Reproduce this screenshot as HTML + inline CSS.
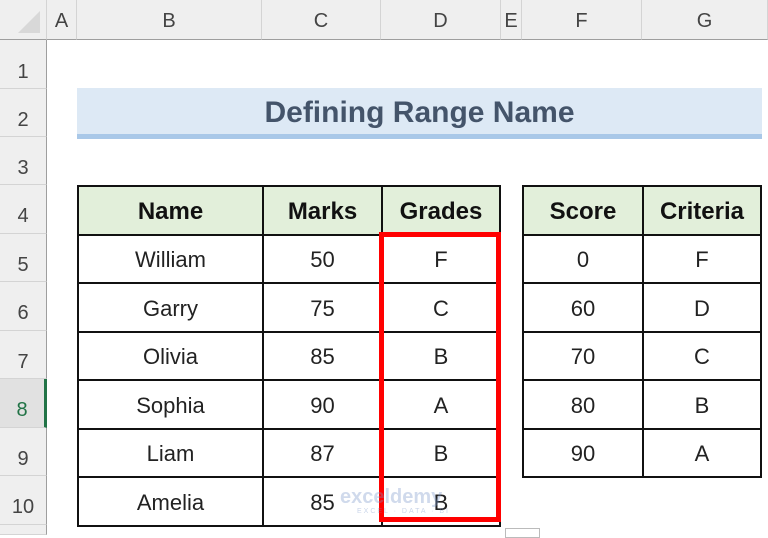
<!DOCTYPE html>
<html><head><style>
*{margin:0;padding:0;box-sizing:border-box}
body{width:768px;height:533px;background:#fff;position:relative;overflow:hidden;font-family:"Liberation Sans",Calibri,sans-serif}
.a{position:absolute}
.ch{top:0;height:40px;background:#efefef;border-right:1px solid #d4d4d4;border-bottom:1px solid #9e9e9e;color:#444;font-size:20px;text-align:center;line-height:42px}
.rh{left:0;width:47px;background:#efefef;border-bottom:1px solid #d4d4d4;border-right:1px solid #9e9e9e;color:#444;font-size:20px;text-align:center}
table{position:absolute;border-collapse:collapse}
td{border:2px solid #111;text-align:center;font-size:22px;color:#222;height:48.5px;padding:0;padding-top:3px}
tr.h td{background:#e2efda;font-weight:bold;font-size:24px;color:#111}
</style></head><body>
<div class="a ch" style="left:0;width:47px"><div style="position:absolute;right:6px;bottom:6px;width:0;height:0;border-left:22px solid transparent;border-bottom:22px solid #d8d8d8"></div></div>
<div class="a ch" style="left:47px;width:30px">A</div>
<div class="a ch" style="left:77px;width:185px">B</div>
<div class="a ch" style="left:262px;width:119px">C</div>
<div class="a ch" style="left:381px;width:120px">D</div>
<div class="a ch" style="left:501px;width:21px">E</div>
<div class="a ch" style="left:522px;width:120px">F</div>
<div class="a ch" style="left:642px;width:126px">G</div>
<div class="a rh" style="top:40px;height:49px;line-height:64px">1</div>
<div class="a rh" style="top:89px;height:48px;line-height:62px">2</div>
<div class="a rh" style="top:137px;height:48px;line-height:62px">3</div>
<div class="a rh" style="top:185px;height:49px;line-height:62px">4</div>
<div class="a rh" style="top:234px;height:48px;line-height:62px">5</div>
<div class="a rh" style="top:282px;height:49px;line-height:62px">6</div>
<div class="a rh" style="top:331px;height:48px;line-height:62px">7</div>
<div class="a rh" style="top:379px;height:49px;line-height:62px;background:#e1e1e1;border-right:3px solid #217346;color:#217346">8</div>
<div class="a rh" style="top:428px;height:48px;line-height:62px">9</div>
<div class="a rh" style="top:476px;height:49px;line-height:62px">10</div>
<div class="a rh" style="top:525px;height:10px"></div>
<div class="a" style="left:77px;top:88px;width:685px;height:51px;background:#dde9f5;border-bottom:5px solid #a9c8e8;text-align:center;font-weight:bold;font-size:30px;color:#44546a;line-height:50px">Defining Range Name</div>
<table style="left:77px;top:185px;width:424px">
<tr class="h"><td style="width:185px">Name</td><td style="width:119px">Marks</td><td>Grades</td></tr>
<tr><td>William</td><td>50</td><td>F</td></tr>
<tr><td>Garry</td><td>75</td><td>C</td></tr>
<tr><td>Olivia</td><td>85</td><td>B</td></tr>
<tr><td>Sophia</td><td>90</td><td>A</td></tr>
<tr><td>Liam</td><td>87</td><td>B</td></tr>
<tr><td>Amelia</td><td>85</td><td>B</td></tr>
</table>
<table style="left:522px;top:185px;width:240px">
<tr class="h"><td style="width:120px">Score</td><td>Criteria</td></tr>
<tr><td>0</td><td>F</td></tr>
<tr><td>60</td><td>D</td></tr>
<tr><td>70</td><td>C</td></tr>
<tr><td>80</td><td>B</td></tr>
<tr><td>90</td><td>A</td></tr>
</table>
<div class="a" style="left:379px;top:232px;width:122px;height:290px;border:5px solid #f00"></div>
<div class="a" style="left:505px;top:528px;width:35px;height:10px;border:1px solid #bbb;background:#fff"></div>
<div class="a" style="left:340px;top:486px;font-size:20px;font-weight:bold;color:rgba(120,150,200,0.35)">exceldemy</div>
<div class="a" style="left:357px;top:508px;font-size:7px;letter-spacing:2px;color:rgba(120,150,200,0.4)">EXCEL · DATA · BI</div>
</body></html>
